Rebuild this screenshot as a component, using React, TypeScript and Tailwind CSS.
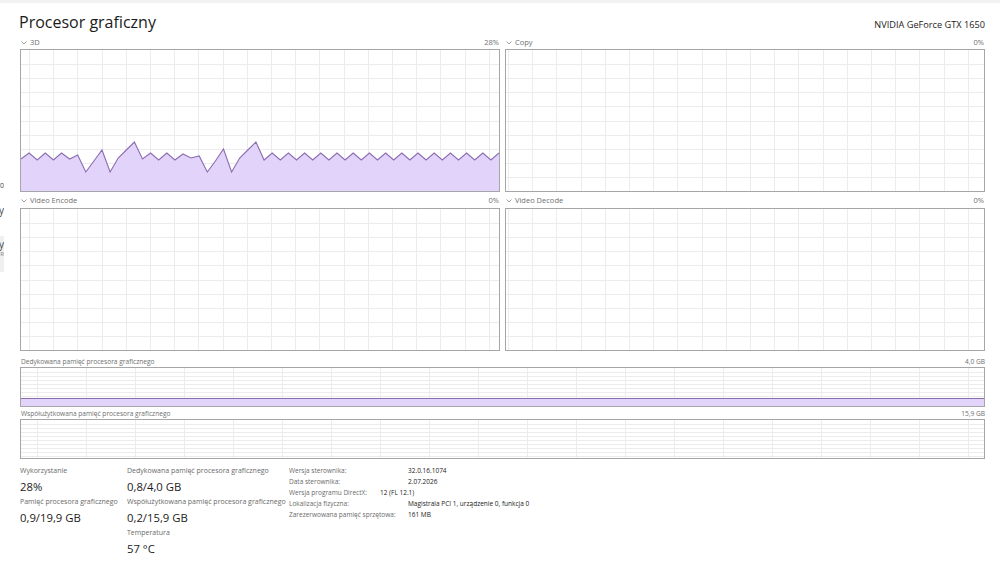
import React from "react";

const ys3d = [
    159, 153, 160, 153, 160, 153, 159, 155, 172, 161, 150, 172, 158, 150, 142, 159, 153, 160, 153, 160, 154, 158, 156,
    172, 161, 149, 172, 158, 150, 142, 160,
];
while (ys3d.length < 60) ys3d.push(ys3d.length % 2 === 1 ? 153 : 160);

function Grid({ w, h, dx, offset, dy }: { w: number; h: number; dx: number; offset: number; dy: number }) {
    const vs: number[] = [];
    for (let x = offset; x < w; x += dx) vs.push(Math.round(x) + 0.5);
    const hs: number[] = [];
    for (let y = dy; y < h; y += dy) hs.push(Math.round(y) + 0.5);
    return (
        <g stroke="#ececec" strokeWidth="1">
            {vs.map((x) => (
                <line key={"v" + x} x1={x} y1={0} x2={x} y2={h} />
            ))}
            {hs.map((y) => (
                <line key={"h" + y} x1={0} y1={y} x2={w} y2={y} />
            ))}
        </g>
    );
}

function Chart({
    label,
    right,
    offset,
    data,
    top = false,
}: {
    label: string;
    right: string;
    offset: number;
    data?: number[];
    top?: boolean;
}) {
    const w = 478;
    const h = 141;
    let line = "";
    let area = "";
    if (data) {
        const step = w / (data.length - 1);
        const pts = data.map((y, i) => `${(i * step).toFixed(1)},${y - 50}`);
        line = pts.join(" ");
        area = `0,${h} ${line} ${w},${h}`;
    }
    return (
        <div className="flex flex-col">
            <div
                className={
                    "flex items-center justify-between text-[7.5px] text-[#6f6f6f] " + (top ? "h-[13px]" : "h-[16px] pt-[1px]")
                }
            >
                <span className="flex items-center gap-[3px] pl-[1px]">
                    <svg width="6" height="4" viewBox="0 0 6 4">
                        <path d="M0.5 0.5 L3 3 L5.5 0.5" fill="none" stroke="#8a8a8a" strokeWidth="0.8" />
                    </svg>
                    {label}
                </span>
                <span className="pr-[1px]">{right}</span>
            </div>
            <div className="h-[143px] border border-[#a6a6a6] bg-white">
                <svg width={w} height={h} className="block">
                    <Grid w={w} h={h} dx={24.2} offset={offset} dy={14.1} />
                    {data && (
                        <>
                            <polygon points={area} fill="#e2d3fa" />
                            <polyline points={line} fill="none" stroke="#8c6db0" strokeWidth="1.1" />
                        </>
                    )}
                </svg>
            </div>
        </div>
    );
}

function MemChart({ label, right, fill }: { label: string; right: string; fill: number }) {
    const w = 963;
    const h = 38;
    return (
        <div className="flex flex-col">
            <div className="flex h-[12px] items-center justify-between pt-[2px] text-[6.6px] text-[#6f6f6f]">
                <span className="pl-[1px]">{label}</span>
                <span>{right}</span>
            </div>
            <div className="h-[40px] border border-[#a6a6a6] bg-white">
                <svg width={w} height={h} className="block">
                    <Grid w={w} h={h} dx={49} offset={16} dy={4} />
                    {fill > 0 && (
                        <>
                            <rect x={0} y={h - fill} width={w} height={fill} fill="#e2d3fa" />
                            <line x1={0} y1={h - fill + 0.5} x2={w} y2={h - fill + 0.5} stroke="#8c6db0" strokeWidth="1" />
                        </>
                    )}
                </svg>
            </div>
        </div>
    );
}

function Stat({ label, value }: { label: string; value: string }) {
    return (
        <div className="flex flex-col whitespace-nowrap">
            <span className="h-[12px] text-[7px] leading-[12px] text-[#6a6a6a]">{label}</span>
            <span className="h-[19px] text-[11.3px] leading-[19px] text-[#1b1b1b]">{value}</span>
        </div>
    );
}

const details: [string, string, number?][] = [
    ["Wersja sterownika:", "32.0.16.1074"],
    ["Data sterownika:", "2.07.2026"],
    ["Wersja programu DirectX:", "12 (FL 12.1)", 91],
    ["Lokalizacja fizyczna:", "Magistrala PCI 1, urządzenie 0, funkcja 0"],
    ["Zarezerwowana pamięć sprzętowa:", "161 MB"],
];

export default function App() {
    return (
        <div className="flex h-[566px] w-[1000px] flex-col overflow-hidden bg-white font-['Open_Sans',sans-serif]">
            <div className="h-[3px] bg-[#f2f2f2]" />
            <div className="flex flex-1">
                <div className="flex w-[4px] flex-col items-end overflow-hidden text-[#444]">
                    <span className="mt-[178px] text-[7px] leading-[10px]">0</span>
                    <span className="mt-[13px] text-[10px] leading-[12px]">y</span>
                    <div className="mt-[20px] flex h-[36px] w-full flex-col items-end bg-[#f0f0f0]">
                        <span className="mt-[2px] text-[10px] leading-[12px]">y</span>
                        <span className="text-[6px] leading-[8px] text-[#888]">R</span>
                    </div>
                </div>
                <div className="flex flex-1 flex-col pl-[16px] pr-[15px]">
                    <div className="flex h-[33px] items-start justify-between">
                        <span className="-ml-[1px] mt-[8px] text-[16px] leading-[22px] text-[#1b1b1b]">Procesor graficzny</span>
                        <span className="mt-[15px] text-[9.2px] leading-[14px] text-[#1b1b1b]">NVIDIA GeForce GTX 1650</span>
                    </div>
                    <div className="grid grid-cols-2 gap-x-[5px]">
                        <Chart label="3D" right="28%" offset={8} data={ys3d} top />
                        <Chart label="Copy" right="0%" offset={2} top />
                    </div>
                    <div className="grid grid-cols-2 gap-x-[5px]">
                        <Chart label="Video Encode" right="0%" offset={8} />
                        <Chart label="Video Decode" right="0%" offset={2} />
                    </div>
                    <div className="mt-[4px]">
                        <MemChart label="Dedykowana pamięć procesora graficznego" right="4,0 GB" fill={8} />
                    </div>
                    <MemChart label="Współużytkowana pamięć procesora graficznego" right="15,9 GB" fill={0} />
                    <div className="mt-[6px] flex">
                        <div className="flex w-[107px] flex-col">
                            <Stat label="Wykorzystanie" value="28%" />
                            <Stat label="Pamięć procesora graficznego" value="0,9/19,9 GB" />
                        </div>
                        <div className="flex w-[162px] flex-col">
                            <Stat label="Dedykowana pamięć procesora graficznego" value="0,8/4,0 GB" />
                            <Stat label="Współużytkowana pamięć procesora graficznego" value="0,2/15,9 GB" />
                            <Stat label="Temperatura" value="57 °C" />
                        </div>
                        <div className="flex flex-col pt-[0px] text-[6.5px] leading-[11px]">
                            {details.map(([l, v, lw]) => (
                                <div key={l} className="flex whitespace-nowrap">
                                    <span className="text-[#6a6a6a]" style={{ width: lw ?? 119 }}>
                                        {l}
                                    </span>
                                    <span className="text-[#1b1b1b]">{v}</span>
                                </div>
                            ))}
                        </div>
                    </div>
                </div>
            </div>
        </div>
    );
}
